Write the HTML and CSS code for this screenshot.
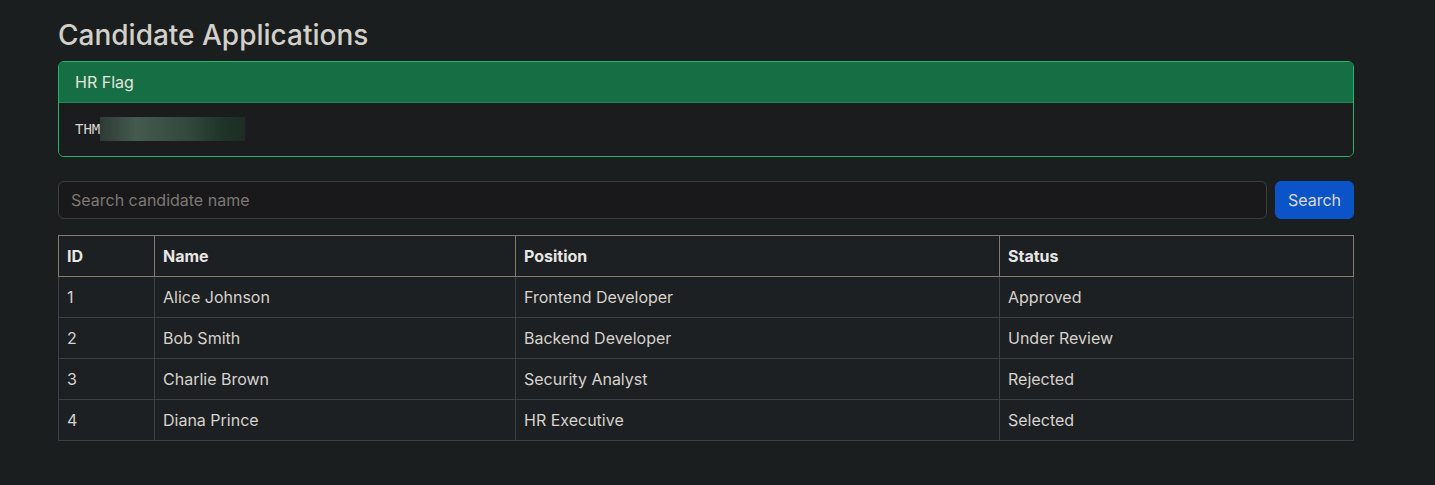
FILE: index.html
```html
<!DOCTYPE html>
<html lang="en">
<head>
    <meta charset="UTF-8">
    <meta name="viewport" content="width=device-width, initial-scale=1.0">
    <title>Candidate Applications</title>
    <link rel="stylesheet" href="styles.css">
</head>
<body>

    <div class="container">
        <h3 class="title">Candidate Applications</h3>

        <div class="card">
            <div class="card-header">HR Flag</div>
            <div class="card-body">
                <code class="flag">THM<span class="redacted"></span></code>
            </div>
        </div>

        <form class="search-form" onsubmit="return false;">
            <input type="text" class="search-input" placeholder="Search candidate name">
            <button type="submit" class="search-btn">Search</button>
        </form>

        <table class="candidates">
            <thead>
                <tr>
                    <th class="col-id">ID</th>
                    <th class="col-name">Name</th>
                    <th class="col-position">Position</th>
                    <th>Status</th>
                </tr>
            </thead>
            <tbody>
                <tr><td>1</td><td>Alice Johnson</td><td>Frontend Developer</td><td>Approved</td></tr>
                <tr><td>2</td><td>Bob Smith</td><td>Backend Developer</td><td>Under Review</td></tr>
                <tr><td>3</td><td>Charlie Brown</td><td>Security Analyst</td><td>Rejected</td></tr>
                <tr><td>4</td><td>Diana Prince</td><td>HR Executive</td><td>Selected</td></tr>
            </tbody>
        </table>
    </div>

</body>
</html>
```

FILE: styles.css
```css
body {
    margin: 0;
    font-family: Inter, "Noto Sans", sans-serif;
    font-size: 16px;
    line-height: 1.5;
    background-color: #1b1e1f;
    color: #d6d2cc;
}
.container {
    width: 1296px;
    margin-left: 58px;
    padding-top: 19px;
}
.title {
    font-size: 28px;
    font-weight: 500;
    line-height: 1.2;
    margin: 0 0 8px;
    color: #d3cfc9;
}
.card {
    border: 1px solid #23b56c;
    border-radius: 6px;
    overflow: hidden;
    margin-bottom: 24px;
}
.card-header {
    background-color: #166e44;
    color: #e6e3de;
    padding: 8px 16px;
    border-bottom: 1px solid #1f8a57;
}
.card-body {
    background-color: #1b1c1e;
    padding: 16px;
}
.flag {
    display: flex;
    align-items: center;
    height: 21px;
    font-family: "DejaVu Sans Mono", "Liberation Mono", monospace;
    font-size: 14px;
    line-height: 21px;
    color: #d8d4cf;
}
.redacted {
    display: inline-block;
    flex-shrink: 0;
    width: 145px;
    height: 24px;
    background: linear-gradient(90deg, #2f3a36 0%, #445a4f 25%, #34493e 60%, #1f3429 85%, #1c2d24 100%);
}
.search-form {
    display: flex;
    gap: 8px;
    margin-bottom: 16px;
}
.search-input {
    flex: 1;
    height: 38px;
    box-sizing: border-box;
    padding: 6px 12px;
    font-family: inherit;
    font-size: 16px;
    color: #d6d2cc;
    background-color: #19191b;
    border: 1px solid #3b3f42;
    border-radius: 6px;
}
.search-input::placeholder {
    color: #7d7871;
}
.search-btn {
    height: 38px;
    padding: 6px 12px;
    font-family: inherit;
    font-size: 16px;
    color: #dcd9d4;
    background-color: #0a54c8;
    border: 1px solid #0b55cb;
    border-radius: 6px;
    cursor: pointer;
}
.candidates {
    width: 100%;
    border-collapse: collapse;
    background-color: #1d2022;
}
.candidates th, .candidates td {
    text-align: left;
    padding: 8px;
    border: 1px solid #3c4043;
}
.candidates th {
    font-weight: 700;
    color: #e8e6e3;
    border-color: #857a6d;
}
.candidates td {
    color: #d6d2cc;
}
.col-id {
    width: 79px;
}
.col-name {
    width: 344px;
}
.col-position {
    width: 467px;
}
```
